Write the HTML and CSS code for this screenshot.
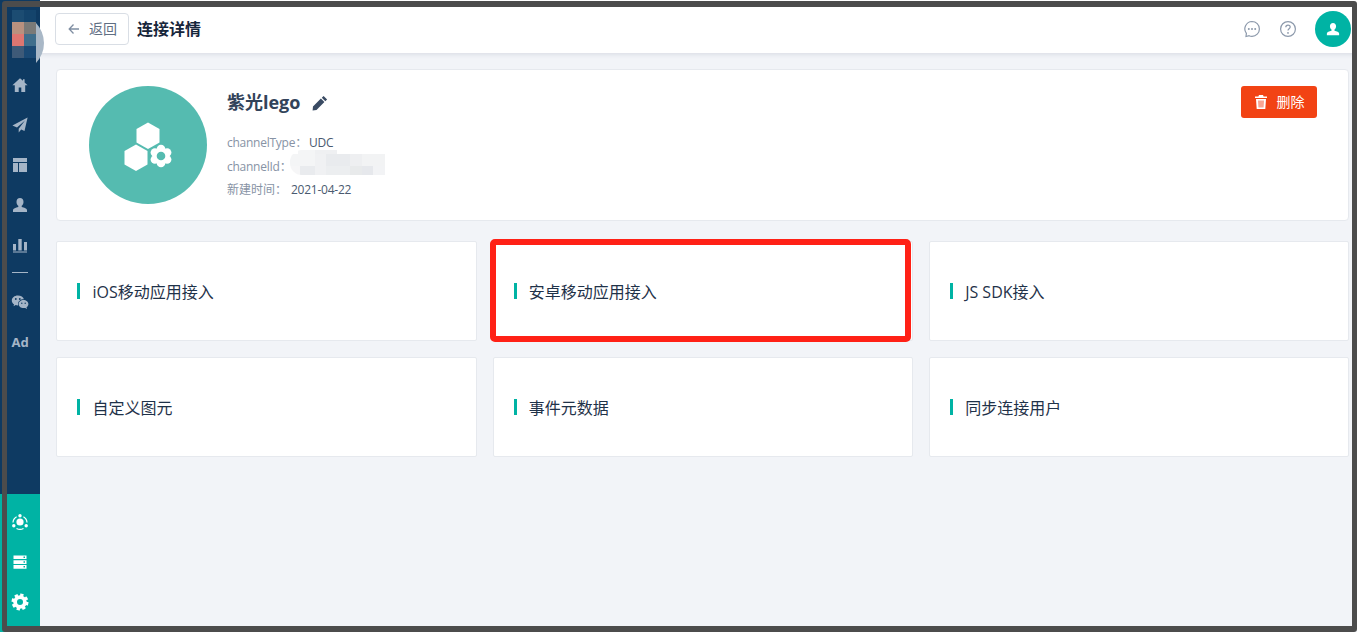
FILE: index.html
```html
<!DOCTYPE html>
<html lang="zh-CN">
<head>
<meta charset="utf-8">
<title>连接详情</title>
<link rel="stylesheet" href="styles.css">
</head>
<body>
<div class="app">
  <aside class="sidebar">
    <div class="side-top">
      <div class="logo">
        <div class="logo-ring"></div>
        <div class="mosaic"><i></i><i></i><i></i><i></i><i></i><i></i><i></i><i></i></div>
      </div>
      <a class="side-item"><svg class="ico" viewBox="0 0 16 16"><path d="M8 1.200.4 8.200h2.400V15h3.900v-4.600h2.600V15h3.900V8.200h2.400l-3-2.800V2.200H11v1.600z"/></svg></a>
      <a class="side-item"><svg class="ico" viewBox="0 0 16 16"><path d="M15.600.6.400 8.600l4.600 1.900 8-7-6.300 8.200v3.700l2.500-2.900 3.300 1.400z"/></svg></a>
      <a class="side-item"><svg class="ico" viewBox="0 0 16 16"><path d="M1 1h14v4H1zM1 6h5v9H1zM7 6h8v9H7z"/></svg></a>
      <a class="side-item"><svg class="ico" viewBox="0 0 16 16"><path d="M8 1c2.200 0 3.500 1.700 3.500 3.900 0 1.700-.8 3.100-1.800 3.800v1.200c2.500.7 5.300 1.500 5.300 3.100V15H1v-2c0-1.600 2.800-2.400 5.300-3.100V8.700C5.300 8 4.500 6.600 4.500 4.900 4.500 2.700 5.800 1 8 1z"/></svg></a>
      <a class="side-item"><svg class="ico" viewBox="0 0 16 16"><path d="M1 7h3v6.500H1zM6.300 2h3.400v11.500H6.300zM12 5h3v8.500h-3zM1 14.500h14v1H1z"/></svg></a>
      <div class="side-divider"></div>
      <a class="side-item"><svg class="ico ico-lg" viewBox="0 0 18 18"><path d="M6.800 2.500C3.500 2.500.8 4.700.8 7.500c0 1.600.9 3 2.300 3.900l-.6 1.800 2.200-1.100c.7.200 1.400.3 2.100.3h.4a4.600 4.600 0 0 1-.2-1.300c0-2.700 2.500-4.800 5.600-4.800h.3c-.5-2.100-3-3.800-6.100-3.800z"/><path d="M17.400 11c0-2.300-2.300-4.100-4.900-4.100S7.600 8.700 7.600 11s2.300 4.100 4.900 4.100c.6 0 1.100-.1 1.700-.2l1.800 1-.5-1.600c1.200-.8 1.900-2 1.900-3.300z"/><g class="wechat-eyes"><circle cx="4.800" cy="6" r=".9"/><circle cx="8.800" cy="6" r=".9"/><circle cx="10.800" cy="10.200" r=".7"/><circle cx="14.200" cy="10.200" r=".7"/></g></svg></a>
      <a class="side-item side-ad">Ad</a>
    </div>
    <div class="side-bottom">
      <a class="side-item"><svg class="ico ico-white ico-lg" viewBox="0 0 18 18"><circle cx="9" cy="9" r="3.600"/><circle cx="9" cy="2.800" r="1.700"/><circle cx="2.800" cy="12.800" r="1.700"/><circle cx="15.200" cy="12.800" r="1.700"/><path class="ring-line" d="M5.600 3.800A7 7 0 0 0 2 9.500M12.400 3.800A7 7 0 0 1 16 9.500M5.500 15.500a7.500 7.500 0 0 0 7 0"/></svg></a>
      <a class="side-item"><svg class="ico ico-white" viewBox="0 0 16 16"><path d="M1.500 1.500h13v3.600h-13zM1.500 6.300h13v3.600h-13zM1.500 11.100h13v3.600h-13z"/><path class="server-dot" d="M11.500 2.500h1.500V4h-1.500zM11.500 7.300h1.500v1.500h-1.500zM11.500 12.100h1.500v1.500h-1.500z"/></svg></a>
      <a class="side-item"><svg class="ico ico-white ico-lg" viewBox="0 0 18 18"><circle class="gear-ring" cx="9" cy="9" r="4.900"/><circle class="gear-teeth" cx="9" cy="9" r="7.200"/></svg></a>
    </div>
  </aside>

  <main class="main">
    <header class="topbar">
      <a class="back-btn">
        <svg class="back-ico" viewBox="0 0 12 12"><path d="M11 6H1.500M5.500 1.500 1.200 6l4.300 4.500"/></svg>
        <span>返回</span>
      </a>
      <h1 class="page-title">连接详情</h1>
      <div class="top-actions">
        <svg class="top-ico" viewBox="0 0 18 18"><path class="line" d="M9 1.500a7.400 7.400 0 0 1 0 14.800c-1 0-2-.2-2.900-.6L3 16.500l.4-3.100A7.400 7.400 0 0 1 9 1.500z"/><circle class="dot" cx="5.800" cy="9" r="1"/><circle class="dot" cx="9" cy="9" r="1"/><circle class="dot" cx="12.200" cy="9" r="1"/></svg>
        <svg class="top-ico" viewBox="0 0 18 18"><circle class="line" cx="9" cy="9" r="7.400"/><path class="line" d="M6.800 7.200c0-1.300 1-2.100 2.200-2.100s2.200.8 2.200 2c0 1.700-2.200 1.700-2.200 3.500"/><circle class="dot" cx="9" cy="12.900" r=".9"/></svg>
        <div class="user-badge"><svg class="user-ico" viewBox="0 0 16 16"><path d="M8 1c2.200 0 3.500 1.700 3.500 3.900 0 1.700-.8 3.100-1.800 3.800v1.200c2.500.7 5.300 1.500 5.300 3.100V15H1v-2c0-1.600 2.800-2.400 5.300-3.100V8.700C5.300 8 4.500 6.600 4.500 4.900 4.500 2.700 5.800 1 8 1z"/></svg></div>
      </div>
    </header>

    <div class="content">
      <section class="info-card">
        <div class="hero">
          <svg class="hero-ico" viewBox="0 0 118 118">
            <path d="M59 36.500 70.500 43v13.500L59 63l-11.500-6.500V43z"/>
            <path d="M47 58.500 58.500 65v13.500L47 85l-11.500-6.500V65z"/>
            <g>
              <circle cx="72" cy="63" r="4.300"/><circle cx="72" cy="77" r="4.300"/>
              <circle cx="65.900" cy="66.500" r="4.300"/><circle cx="78.100" cy="66.500" r="4.300"/>
              <circle cx="65.900" cy="73.500" r="4.300"/><circle cx="78.100" cy="73.500" r="4.300"/>
              <circle cx="72" cy="70" r="7"/>
              <circle class="hero-hole" cx="72" cy="70" r="4.300"/>
            </g>
          </svg>
        </div>
        <div class="info">
          <div class="name-row">
            <h2 class="name">紫光lego</h2>
            <svg class="pencil" viewBox="0 0 16 16"><path d="M11.600.9l3.500 3.500-1.800 1.800-3.500-3.500zM8.900 3.600l3.500 3.500-7.900 7.900L.6 15.400 1 11.500z"/></svg>
          </div>
          <dl class="meta">
            <div class="meta-row"><dt class="latin">channelType：</dt><dd class="latin">UDC</dd></div>
            <div class="meta-row"><dt class="latin">channelId：</dt><dd class="blurred"></dd></div>
            <div class="meta-row meta-date"><dt>新建时间：</dt><dd class="latin">2021-04-22</dd></div>
          </dl>
        </div>
        <button class="delete-btn" type="button">
          <svg class="trash" viewBox="0 0 14 14"><path d="M5 0h4l.6 1.500H13V3H1V1.500h3.400zM2 4h10l-.7 10H2.700z"/><path class="trash-in" d="M4 5.500h6l-.4 7H4.400z"/></svg>
          <span>删除</span>
        </button>
      </section>

      <section class="tiles">
        <a class="tile"><span>iOS移动应用接入</span></a>
        <a class="tile tile-marked"><span>安卓移动应用接入</span></a>
        <a class="tile"><span>JS SDK接入</span></a>
        <a class="tile"><span>自定义图元</span></a>
        <a class="tile"><span>事件元数据</span></a>
        <a class="tile"><span>同步连接用户</span></a>
      </section>
    </div>
  </main>
</div>
<div class="screen-frame"></div>
</body>
</html>
```
FILE: styles.css
```css
*, *::before, *::after { box-sizing: border-box; }
html, body { margin: 0; height: 100%; overflow: hidden; }
body {
  background: #f2f4f8;
  color: #24364d;
  font-family: "Open Sans", "Noto Sans CJK SC", sans-serif;
}
.app { display: flex; height: 632px; }

/* sidebar */
.sidebar {
  width: 40px;
  flex: none;
  background: #0e3a62;
  display: flex;
  flex-direction: column;
  justify-content: space-between;
  position: relative;
  z-index: 3;
}
.logo { height: 65px; position: relative; }
.logo-ring {
  position: absolute;
  left: -14px;
  top: 14px;
  width: 58px;
  height: 58px;
  border-radius: 50%;
  background: #a9b8c7;
  clip-path: inset(0 0 0 50px);
}
.mosaic {
  position: absolute;
  left: 12px;
  top: 10px;
  display: grid;
  grid-template-columns: repeat(2, 12px);
  grid-auto-rows: 12px;
}
.mosaic i:nth-child(1) { background: #1c4c72; }
.mosaic i:nth-child(2) { background: #14446c; }
.mosaic i:nth-child(3) { background: #b8917f; }
.mosaic i:nth-child(4) { background: #7a7a78; }
.mosaic i:nth-child(5) { background: #dd7671; }
.mosaic i:nth-child(6) { background: #3f6e8c; }
.mosaic i:nth-child(7) { background: #3e5a78; }
.mosaic i:nth-child(8) { background: #1b4a75; }

.side-item {
  display: flex;
  align-items: center;
  justify-content: center;
  height: 40px;
}
.ico { width: 16px; height: 16px; fill: #a5b5c7; }
.ico-lg { width: 18px; height: 18px; }
.ico-white { fill: #fff; }
.wechat-eyes { fill: #0e3a62; }
.side-divider { height: 17px; padding-top: 7px; }
.side-divider::before {
  content: "";
  display: block;
  width: 16px;
  height: 1px;
  margin: 0 auto;
  background: #a5b5c7;
}
.side-ad {
  color: #a5b5c7;
  font: 700 13px "Noto Sans", sans-serif;
}
.side-bottom {
  background: #00b3a4;
  height: 138px;
  padding-top: 8px;
}
.ring-line { fill: none; stroke: #fff; stroke-width: 1.200; }
.server-dot { fill: #00b3a4; }
.gear-ring { fill: none; stroke: #fff; stroke-width: 3.800; }
.gear-teeth { fill: none; stroke: #fff; stroke-width: 2.600; stroke-dasharray: 3.300 2.350; }

/* header */
.main { flex: 1; min-width: 0; display: flex; flex-direction: column; }
.topbar {
  height: 53px;
  flex: none;
  background: #fff;
  box-shadow: 0 1px 5px rgba(40, 60, 90, .14);
  display: flex;
  align-items: center;
  padding: 5px 6px 0 15px;
  position: relative;
  z-index: 2;
}
.back-btn {
  width: 74px;
  height: 32px;
  border: 1px solid #d9dee5;
  border-radius: 4px;
  display: flex;
  align-items: center;
  padding-left: 12px;
  gap: 9px;
  font-size: 14px;
  color: #5f6e83;
  line-height: 1;
}
.back-ico { width: 12px; height: 12px; fill: none; stroke: #7f8ea2; stroke-width: 1.300; }
.page-title {
  margin: 0 0 0 8px;
  font-size: 16px;
  font-weight: 700;
  color: #17263b;
  line-height: 32px;
}
.top-actions {
  margin-left: auto;
  display: flex;
  align-items: center;
  gap: 18px;
}
.top-ico { width: 18px; height: 18px; }
.top-ico .line { fill: none; stroke: #8c99ab; stroke-width: 1.200; }
.top-ico .dot { fill: #8c99ab; }
.user-badge {
  width: 36px;
  height: 36px;
  border-radius: 50%;
  background: #00b3a4;
  display: flex;
  align-items: center;
  justify-content: center;
}
.user-ico { width: 14px; height: 14px; fill: #fff; }

/* content */
.content { padding: 16px 8px 0 16.400px; }
.info-card {
  width: 1293px;
  height: 152px;
  background: #fff;
  border: 1px solid #e6e9ee;
  border-radius: 4px;
  display: flex;
  align-items: flex-start;
  padding: 16px 31px 16px 31.600px;
}
.hero {
  width: 118px;
  height: 118px;
  border-radius: 50%;
  background: #55bbb0;
  flex: none;
}
.hero-ico { display: block; width: 118px; height: 118px; fill: #fff; }
.hero-hole { fill: #55bbb0; }
.info { margin-left: 20px; }
.name-row { display: flex; align-items: center; gap: 12px; height: 33px; }
.name {
  margin: 0;
  font-size: 18px;
  font-weight: 700;
  color: #32435a;
  line-height: 33px;
}
.pencil { width: 16px; height: 16px; fill: #3a4b63; }
.meta { margin: 12px 0 0; font-size: 12px; }
.meta-row { display: flex; line-height: 24px; height: 24px; }
.meta dt { color: #8793a5; }
.meta dd { margin: 0 0 0 2px; color: #4a5a70; }
.meta .latin { letter-spacing: -.25px; }
.meta .meta-date { margin-top: -1px; }
.meta .meta-date dd { margin-left: 4px; }
.meta .blurred {
  width: 95px;
  height: 25px;
  margin: -5px 0 0 -1px;
  border-radius: 12px 0 0 12px;
  background:
    linear-gradient(90deg, #f4f5f6 0 25px, #f0f1f3 25px 36px, #e9ebee 36px 60px, #eeeff1 60px 72px, #f2f3f4 72px 95px) 0 4px / 100% 12px no-repeat,
    linear-gradient(90deg, #f6f6f7 0 10px, #e9ebee 10px 25px, #f0f1f3 25px 36px, #eceef0 36px 60px, #e8eaeb 60px 72px, #e6e8ec 72px 83px, #f2f3f5 83px 95px) 0 16px / 100% 9px no-repeat,
    linear-gradient(90deg, transparent 0 8px, #f4f5f6 8px 25px, #eff0f2 25px 47px, transparent 47px) 0 0 / 100% 4px no-repeat;
}
.delete-btn {
  margin-left: auto;
  width: 76px;
  height: 32px;
  border: 0;
  border-radius: 3px;
  background: #f24314;
  color: #fff;
  display: flex;
  align-items: center;
  justify-content: center;
  gap: 8px;
  font: 14px "Open Sans", "Noto Sans CJK SC", sans-serif;
  line-height: 1;
  padding: 0;
}
.trash { width: 14px; height: 14px; fill: #fff; }
.trash-in { fill: #f9a592; }

/* tiles */
.tiles {
  display: grid;
  grid-template-columns: repeat(3, 420.200px);
  grid-auto-rows: 100px;
  gap: 16px 16.200px;
  margin-top: 20px;
}
.tile {
  background: #fff;
  border: 1px solid #e6e9ee;
  border-radius: 2px;
  display: flex;
  align-items: center;
  padding-left: 20px;
  position: relative;
  color: #1f3249;
}
.tile span {
  display: block;
  height: 16px;
  font-size: 16px;
  line-height: 18px;
  border-left: 3px solid #00b3a4;
  padding-left: 12px;
}
.tile-marked::after {
  content: "";
  position: absolute;
  left: -3.500px;
  top: -3.500px;
  width: 421px;
  height: 103px;
  border: 6px solid #ff2116;
  border-radius: 5px;
}

/* screenshot frame overlay */
.screen-frame {
  position: fixed;
  left: 2px;
  top: 1px;
  width: 1355px;
  height: 631px;
  border: solid #4c4c4c;
  border-width: 6px 5px 6px 5px;
  border-radius: 3px;
  z-index: 9;
  pointer-events: none;
}
```
